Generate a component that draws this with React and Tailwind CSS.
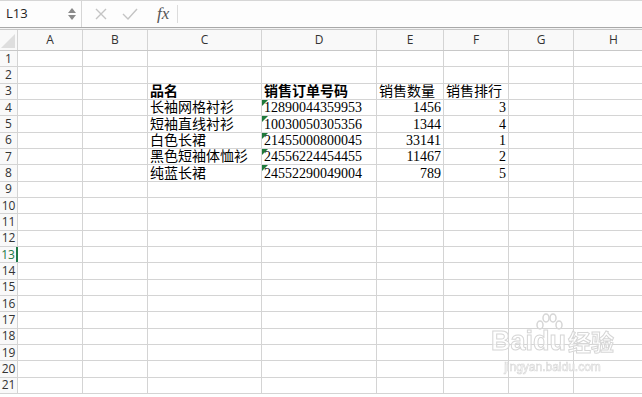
import React from 'react';

const cols = [
  { key: 'A', w: 65 },
  { key: 'B', w: 65 },
  { key: 'C', w: 114 },
  { key: 'D', w: 115 },
  { key: 'E', w: 67 },
  { key: 'F', w: 65 },
  { key: 'G', w: 65 },
  { key: 'H', w: 80 },
];

const data = {
  3: { C: { t: '品名', b: true }, D: { t: '销售订单号码', b: true }, E: { t: '销售数量' }, F: { t: '销售排行' } },
  4: { C: { t: '长袖网格衬衫' }, D: { t: '12890044359953', tri: true }, E: { t: '1456', r: true }, F: { t: '3', r: true } },
  5: { C: { t: '短袖直线衬衫' }, D: { t: '10030050305356', tri: true }, E: { t: '1344', r: true }, F: { t: '4', r: true } },
  6: { C: { t: '白色长裙' }, D: { t: '21455000800045', tri: true }, E: { t: '33141', r: true }, F: { t: '1', r: true } },
  7: { C: { t: '黑色短袖体恤衫' }, D: { t: '24556224454455', tri: true }, E: { t: '11467', r: true }, F: { t: '2', r: true } },
  8: { C: { t: '纯蓝长裙' }, D: { t: '24552290049004', tri: true }, E: { t: '789', r: true }, F: { t: '5', r: true } },
};

const cellFont = { fontFamily: '"Liberation Serif", "Noto Sans CJK SC", serif' };
const uiFont = { fontFamily: '"Open Sans", "Liberation Sans", sans-serif' };

const Cell = ({ w, cell }) => (
  <div
    className="relative flex items-end h-full border-r border-[#d4d4d4] shrink-0 overflow-visible"
    style={{ width: w }}
  >
    {cell?.tri && (
      <div className="absolute left-0 top-0 w-0 h-0 border-t-[6px] border-r-[6px] border-t-[#1e7a3c] border-r-transparent" />
    )}
    {cell && (
      <span
        className={`w-full px-[2px] text-[14px] leading-[15px] text-black whitespace-nowrap ${cell.r ? 'text-right' : 'text-left'} ${cell.b ? 'font-bold' : ''}`}
        style={cellFont}
      >
        {cell.t}
      </span>
    )}
  </div>
);

export default function App() {
  const rows = Array.from({ length: 21 }, (_, i) => i + 1);
  return (
    <div className="w-[642px] h-[397px] overflow-hidden bg-white" style={uiFont}>
      {/* formula bar */}
      <div className="h-[28px] flex border-t border-[#d6d6d6] border-b border-b-[#a9a9a9] bg-[#fdfdfd]">
        <div className="w-[82px] flex items-center justify-between pl-[6px] pr-[5px] border-r border-[#d6d6d6]">
          <span className="text-[13px] text-[#222]">L13</span>
          <div className="flex flex-col items-center gap-[2px]">
            <div className="w-0 h-0 border-l-[4px] border-r-[4px] border-b-[5px] border-l-transparent border-r-transparent border-b-[#8a8a8a]" />
            <div className="w-0 h-0 border-l-[4px] border-r-[4px] border-t-[5px] border-l-transparent border-r-transparent border-t-[#8a8a8a]" />
          </div>
        </div>
        <div className="flex items-center pl-[12px]">
          <svg width="14" height="14" viewBox="0 0 14 14" stroke="#c4c4c4" strokeWidth="1.4">
            <path d="M2 2 L12 12 M12 2 L2 12" />
          </svg>
          <svg className="ml-[14px]" width="16" height="14" viewBox="0 0 16 14" fill="none" stroke="#c4c4c4" strokeWidth="1.4">
            <path d="M1 7 L6 12 L15 2" />
          </svg>
          <span
            className="ml-[19px] text-[17px] italic text-[#555] pr-[8px] border-r border-[#dcdcdc] leading-[18px]"
            style={{ fontFamily: '"Liberation Serif", serif' }}
          >
            fx
          </span>
        </div>
      </div>
      <div className="h-[1px] bg-[#f4f4f4]" />
      {/* column header */}
      <div className="h-[22px] flex border-t border-[#c8c8c8] border-b border-b-[#c8c8c8] bg-[#f9f9f9]">
        <div className="w-[18px] shrink-0 h-full border-r border-[#d4d4d4] relative overflow-hidden">
          <div className="absolute right-[2px] bottom-[2px] w-0 h-0" style={{ borderBottom: '14px solid #dedede', borderLeft: '14px solid transparent' }} />
        </div>
        {cols.map((c) => (
          <div
            key={c.key}
            className="shrink-0 flex items-center justify-center h-full border-r border-[#d4d4d4] text-[12px] text-[#333]"
            style={{ width: c.w }}
          >
            {c.key}
          </div>
        ))}
      </div>
      {/* rows */}
      <div className="flex flex-col">
        {rows.map((r) => (
          <div key={r} className="flex h-[16.33px] border-b border-[#d4d4d4] box-border">
            <div
              className={`w-[18px] shrink-0 h-full flex items-center justify-center text-[12px] leading-none ${r === 13 ? 'text-[#1e7a48] border-r-2 border-[#1e7a48]' : 'text-[#333] border-r border-[#d4d4d4]'} bg-[#f9f9f9]`}
            >
              {r}
            </div>
            {cols.map((c) => (
              <Cell key={c.key} w={c.w} cell={data[r]?.[c.key]} />
            ))}
          </div>
        ))}
      </div>
      {/* watermark */}
      <div className="fixed left-[491px] top-[328px] flex flex-col items-center pointer-events-none select-none">
        <div
          className="relative flex items-end text-[27px] font-bold leading-none text-white/60 [-webkit-text-stroke:1px_#d6d6d6]"
          style={{ fontFamily: '"Liberation Sans", "Noto Sans CJK SC", sans-serif' }}
        >
          <span>Bai</span>
          <span className="relative">
            <svg className="absolute -top-[15px] left-[2px]" width="28" height="20" viewBox="0 0 28 20" fill="none" stroke="#d6d6d6" strokeWidth="1.5">
              <ellipse cx="5" cy="12" rx="3" ry="4" />
              <ellipse cx="11" cy="5" rx="3" ry="4" />
              <ellipse cx="18" cy="5" rx="3" ry="4" />
              <ellipse cx="24" cy="12" rx="3" ry="4" />
            </svg>
            du
          </span>
          <span className="text-[23px] ml-[2px]">经验</span>
        </div>
        <span className="text-[12px] text-white/60 mt-[3px] [-webkit-text-stroke:0.6px_#d6d6d6]" style={{ fontFamily: '"Liberation Sans", sans-serif' }}>
          jingyan.baidu.com
        </span>
      </div>
    </div>
  );
}
